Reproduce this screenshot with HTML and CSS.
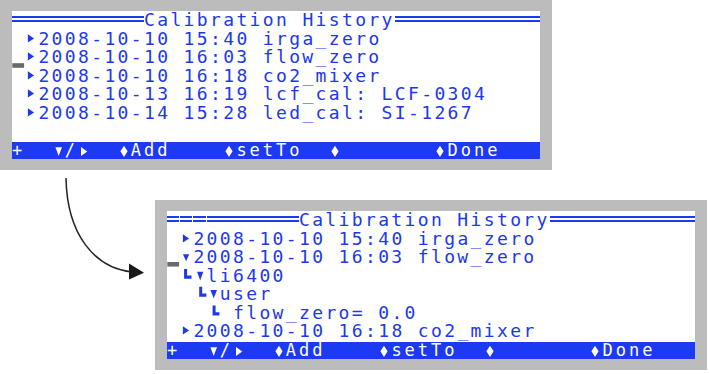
FILE: index.html
```html
<!DOCTYPE html>
<html lang="en">
<head>
  <meta charset="UTF-8" />
  <meta name="viewport" content="width=device-width, initial-scale=1.0" />
  <title>Calibration History</title>
  <link rel="stylesheet" href="styles.css">
</head>
<body>

  <!-- before: list collapsed -->
  <div class="panel">
    <div class="screen">
      <div class="row"><span class="dbl dbl-10"></span>Calibration History<span class="dbl dbl-11"></span></div>
      <div class="row"> <span class="g"><svg viewBox="0 0 13.2 18.5"><polygon points="2.9,4.3 9.1,8.4 2.9,12.5"/></svg></span>2008-10-10 15:40 irga_zero</div>
      <div class="row"><span class="g"><svg viewBox="0 0 13.2 18.5"><rect class="cursor" x="0.3" y="15.2" width="11.8" height="4.6"/></svg></span><span class="g"><svg viewBox="0 0 13.2 18.5"><polygon points="2.9,4.3 9.1,8.4 2.9,12.5"/></svg></span>2008-10-10 16:03 flow_zero</div>
      <div class="row"> <span class="g"><svg viewBox="0 0 13.2 18.5"><polygon points="2.9,4.3 9.1,8.4 2.9,12.5"/></svg></span>2008-10-10 16:18 co2_mixer</div>
      <div class="row"> <span class="g"><svg viewBox="0 0 13.2 18.5"><polygon points="2.9,4.3 9.1,8.4 2.9,12.5"/></svg></span>2008-10-13 16:19 lcf_cal: LCF-0304</div>
      <div class="row"> <span class="g"><svg viewBox="0 0 13.2 18.5"><polygon points="2.9,4.3 9.1,8.4 2.9,12.5"/></svg></span>2008-10-14 15:28 led_cal: SI-1267</div>
      <div class="row"></div>
      <div class="bar">+  <span class="g"><svg viewBox="0 0 13.2 17"><polygon points="3.4,5.3 10,5.3 6.7,14"/></svg></span>/<span class="g"><svg viewBox="0 0 13.2 17"><polygon points="3,5 9.3,9.5 3,14"/></svg></span>  <span class="g"><svg viewBox="0 0 13.2 17"><polygon points="6,3.7 9.6,9.3 6,15 2.4,9.3"/></svg></span>Add    <span class="g"><svg viewBox="0 0 13.2 17"><polygon points="6,3.7 9.6,9.3 6,15 2.4,9.3"/></svg></span>setTo  <span class="g"><svg viewBox="0 0 13.2 17"><polygon points="6,3.7 9.6,9.3 6,15 2.4,9.3"/></svg></span>       <span class="g"><svg viewBox="0 0 13.2 17"><polygon points="6,3.7 9.6,9.3 6,15 2.4,9.3"/></svg></span>Done</div>
    </div>
  </div>

  <!-- after: flow_zero expanded -->
  <div class="panel panel-after">
    <div class="screen">
      <div class="row"><span class="dbl dbl-1"></span><span class="dbl dbl-1"></span><span class="dbl dbl-1"></span><span class="dbl dbl-7"></span>Calibration History<span class="dbl dbl-11"></span></div>
      <div class="row"> <span class="g"><svg viewBox="0 0 13.2 18.5"><polygon points="2.9,4.3 9.1,8.4 2.9,12.5"/></svg></span>2008-10-10 15:40 irga_zero</div>
      <div class="row"><span class="g"><svg viewBox="0 0 13.2 18.5"><rect class="cursor" x="0.3" y="14" width="11.8" height="4.6"/></svg></span><span class="g"><svg viewBox="0 0 13.2 18.5"><polygon points="3,6.3 9.2,6.3 6.1,13.3"/></svg></span>2008-10-10 16:03 flow_zero</div>
      <div class="row"> <span class="g"><svg viewBox="0 0 13.2 18.5"><polygon points="4.1,2 7.1,2 7.1,8.5 11.5,8.5 11.5,11.8 4.1,11.8"/></svg></span><span class="g"><svg viewBox="0 0 13.2 18.5"><polygon points="4.1,4.8 10.3,4.8 7.2,13.5"/></svg></span>li6400</div>
      <div class="row">  <span class="g"><svg viewBox="0 0 13.2 18.5"><polygon points="6.2,1.8 9.2,1.8 9.2,8.4 13.4,8.4 13.4,11.7 6.2,11.7"/></svg></span><span class="g"><svg viewBox="0 0 13.2 18.5"><polygon points="3.4,5 10,5 6.7,13.3"/></svg></span>user</div>
      <div class="row">   <span class="g"><svg viewBox="0 0 13.2 18.5"><polygon points="5.6,1.6 8.6,1.6 8.6,8.2 12.4,8.2 12.4,11.5 5.6,11.5"/></svg></span> flow_zero= 0.0</div>
      <div class="row"> <span class="g"><svg viewBox="0 0 13.2 18.5"><polygon points="2.9,4.3 9.1,8.4 2.9,12.5"/></svg></span>2008-10-10 16:18 co2_mixer</div>
      <div class="bar">+  <span class="g"><svg viewBox="0 0 13.2 17"><polygon points="3.4,5.3 10,5.3 6.7,14"/></svg></span>/<span class="g"><svg viewBox="0 0 13.2 17"><polygon points="3,5 9.3,9.5 3,14"/></svg></span>  <span class="g"><svg viewBox="0 0 13.2 17"><polygon points="6,3.7 9.6,9.3 6,15 2.4,9.3"/></svg></span>Add    <span class="g"><svg viewBox="0 0 13.2 17"><polygon points="6,3.7 9.6,9.3 6,15 2.4,9.3"/></svg></span>setTo  <span class="g"><svg viewBox="0 0 13.2 17"><polygon points="6,3.7 9.6,9.3 6,15 2.4,9.3"/></svg></span>       <span class="g"><svg viewBox="0 0 13.2 17"><polygon points="6,3.7 9.6,9.3 6,15 2.4,9.3"/></svg></span>Done</div>
    </div>
  </div>

  <svg class="arrow" viewBox="0 0 710 374" width="710" height="374">
    <path d="M66,178 C67,235 95,268 132,272" />
    <polygon points="129,263.5 144,272.7 129,279.5" />
  </svg>

</body>
</html>
```

FILE: styles.css
```css
body {
  margin: 0;
  width: 710px;
  height: 374px;
  position: relative;
  overflow: hidden;
  background-color: #fff;
  font-family: "DejaVu Sans Mono", "Liberation Mono", monospace;
}

.panel {
  width: 528px;
  padding: 11px 12px;
  background-color: #bcbcbc;
}

.panel-after {
  margin-top: 30px;
  margin-left: 155px;
}

.screen {
  width: 528px;
  height: 148px;
  background-color: #fff;
  color: #2038ec;
  font-size: 18px;
  letter-spacing: 2.363px;
}

.row {
  height: 18.5px;
  line-height: 18.5px;
  white-space: pre;
}

.bar {
  height: 17px;
  line-height: 17px;
  margin-top: 1.5px;
  white-space: pre;
  background-color: #1c3af2;
  color: #fff;
  font-size: 17px;
  letter-spacing: 2.966px;
}

.g {
  display: inline-block;
  width: 13.2px;
  height: 18.5px;
  vertical-align: top;
}

.g svg {
  display: block;
  width: 13.2px;
  height: 18.5px;
  overflow: visible;
  fill: currentColor;
}

.bar .g,
.bar .g svg {
  height: 17px;
}

.cursor {
  fill: #6a6a6a;
}

/* double rule of the title line */
.dbl {
  display: inline-block;
  height: 18.5px;
  vertical-align: top;
  background: linear-gradient(to bottom,
    transparent 4.8px, #1c3af2 4.8px, #1c3af2 7.3px,
    transparent 7.3px, transparent 9px, #1c3af2 9px, #1c3af2 11.3px,
    transparent 11.3px);
}

.dbl-1 {
  width: 12.2px;
  margin-right: 1px;
}

.dbl-7 {
  width: 92.4px;
}

.dbl-10 {
  width: 132px;
}

.dbl-11 {
  width: 145.2px;
}

.arrow {
  position: absolute;
  left: 0;
  top: 0;
  pointer-events: none;
}

.arrow path {
  fill: none;
  stroke: #222;
  stroke-width: 1.5;
}

.arrow polygon {
  fill: #1a1a1a;
}
```
